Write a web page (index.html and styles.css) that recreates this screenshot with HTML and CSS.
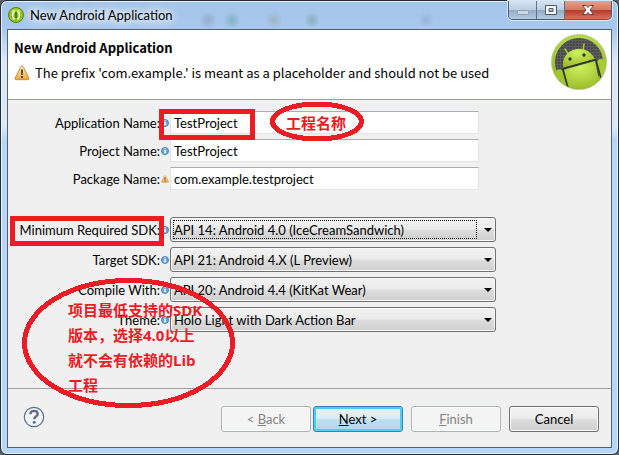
FILE: index.html
```html
<!DOCTYPE html>
<html lang="en">
<head>
<meta charset="utf-8">
<title>New Android Application</title>
<link rel="stylesheet" href="styles.css">
</head>
<body>
<svg class="defs" aria-hidden="true">
  <defs>
    <linearGradient id="amber" x1="0" y1="0" x2="0" y2="1"><stop offset="0" stop-color="#fff3c4"/><stop offset="1" stop-color="#eda63c"/></linearGradient>
    <linearGradient id="lime" x1="0" y1="0" x2="0" y2="1"><stop offset="0" stop-color="#b8db4a"/><stop offset="1" stop-color="#87a51d"/></linearGradient>
    <radialGradient id="robot" cx=".45" cy=".2" r=".9"><stop offset="0" stop-color="#cdf25c"/><stop offset="1" stop-color="#93b422"/></radialGradient>
    <pattern id="mesh" width="3" height="3" patternUnits="userSpaceOnUse"><path fill="#484848" d="M0 0h3v3H0z"/><path fill="#5c5c5c" d="M0 0h1v3H0zM0 0h3v1H0z"/></pattern>
    <clipPath id="disc"><circle cx="28" cy="28" r="27"/></clipPath>
    <symbol id="info" viewBox="0 0 8 8"><circle cx="4" cy="4" r="3.5" fill="#6ba5d0" stroke="#4787b5"/><path fill="#fff" d="M3.4 1.3h1.3v1H3.4zM3 3h1.7v2.5h.6v.8H2.9v-.8h.5V3.8H3z"/></symbol>
    <symbol id="warn" viewBox="0 0 16 16"><path d="M8 1.2Q9 1.2 9.5 2.3L14.8 13Q15.300 14.700 13.700 14.700H2.300Q.700 14.700 1.200 13L6.500 2.300Q7 1.200 8 1.200Z" fill="url(#amber)" stroke="#c78a3a"/><path d="M7 4.500h2L8.700 10H7.300zM7.100 11h1.800v1.900H7.100z" fill="#53391b"/></symbol>
  </defs>
</svg>
<div class="window">
  <header class="titlebar">
    <svg class="app-icon" viewBox="0 0 16 16"><circle cx="8" cy="8" r="7.500" fill="#8fc31d" stroke="#557d0d"/><ellipse cx="8" cy="4.500" rx="5" ry="3" fill="#a5d234"/><path d="M6.700 4Q4.800 4 5 6Q5.200 7.700 3.900 8Q5.200 8.300 5 10Q4.800 12 6.700 12M9.300 4Q11.200 4 11 6Q10.800 7.700 12.100 8Q10.800 8.300 11 10Q11.200 12 9.300 12" fill="none" stroke="#fff" stroke-width="1.300"/><path d="M7.200 5h1.600v6H7.200z" fill="#40650a"/></svg>
    <span class="caption">New Android Application</span>
    <div class="controls">
      <button class="ctl" aria-label="Minimize"><svg width="14" height="12" viewBox="0 0 14 12"><rect x="1.500" y="6.500" width="11" height="4" rx="1" fill="#ccd8e6" stroke="#8d9db2"/></svg></button>
      <button class="ctl" aria-label="Maximize"><svg width="14" height="12" viewBox="0 0 14 12"><path d="M1.500 1.500h11v9h-11zM5 4.500v3h4v-3z" fill="#fff" fill-rule="evenodd" stroke="#4d5768"/></svg></button>
      <button class="ctl close" aria-label="Close"><svg width="14" height="12" viewBox="0 0 14 12"><path d="M1.500 1.500h3.700L7 3.500l1.800-2h3.700L9 6l3.500 4.500H8.800L7 8.500l-1.800 2H1.500L5 6z" fill="#fff" stroke="#60444b"/></svg></button>
    </div>
  </header>
  <main class="dialog">
    <section class="banner">
      <div class="banner-text">
        <h1>New Android Application</h1>
        <p><svg class="warn" viewBox="0 0 16 16"><use href="#warn"/></svg>The prefix 'com.example.' is meant as a placeholder and should not be used</p>
      </div>
      <svg class="logo" viewBox="0 0 56 56">
        <circle cx="28" cy="28" r="27.500" fill="url(#lime)" stroke="#b9cb88"/>
        <circle cx="28" cy="28" r="24" fill="url(#mesh)"/>
        <g clip-path="url(#disc)">
          <path d="M14 15L18 21M33 10L32 17" stroke="#a9ca39" stroke-width="1.500" stroke-linecap="round"/>
          <path d="M12 34Q11 20 22 16Q36 11 44 25Z" fill="url(#robot)"/>
          <path d="M12 36L44 27L50 56H17Z" fill="url(#robot)"/>
          <path d="M46 29Q46 25 50 25Q54 25 56 32V50H51Z" fill="#a8cb36"/>
          <path d="M4 38Q7 34 11 36L16 54L4 47Z" fill="#a1c52f"/>
          <path d="M12 34.500L45 25.500M12 35L17 54M45 26L51 48" fill="none" stroke="#32381f" stroke-width="1.500"/>
          <circle cx="19" cy="25" r="1.700" fill="#34381e"/><circle cx="33" cy="21" r="1.700" fill="#34381e"/>
        </g>
      </svg>
    </section>
    <form class="form">
      <div class="row"><label for="app">Application Name:</label><svg class="mark" viewBox="0 0 8 8"><use href="#info"/></svg><input id="app" type="text" value="TestProject"></div>
      <div class="row"><label for="project">Project Name:</label><svg class="mark" viewBox="0 0 8 8"><use href="#info"/></svg><input id="project" type="text" value="TestProject"></div>
      <div class="row"><label for="package">Package Name:</label><svg class="mark" viewBox="0 0 16 16"><use href="#warn"/></svg><input id="package" type="text" value="com.example.testproject"></div>
      <div class="row pick first"><label for="min">Minimum Required SDK:</label><svg class="mark" viewBox="0 0 8 8"><use href="#info"/></svg><span class="combo focused"><select id="min"><option>API 14: Android 4.0 (IceCreamSandwich)</option></select></span></div>
      <div class="row pick"><label for="target">Target SDK:</label><svg class="mark" viewBox="0 0 8 8"><use href="#info"/></svg><span class="combo"><select id="target"><option>API 21: Android 4.X (L Preview)</option></select></span></div>
      <div class="row pick"><label for="compile">Compile With:</label><svg class="mark" viewBox="0 0 8 8"><use href="#info"/></svg><span class="combo"><select id="compile"><option>API 20: Android 4.4 (KitKat Wear)</option></select></span></div>
      <div class="row pick"><label for="theme">Theme:</label><svg class="mark" viewBox="0 0 8 8"><use href="#info"/></svg><span class="combo"><select id="theme"><option>Holo Light with Dark Action Bar</option></select></span></div>
    </form>
    <footer class="actions">
      <button class="help" aria-label="Help"><svg width="22" height="22" viewBox="0 0 22 22"><circle cx="11" cy="11" r="9.700" fill="#f3f5f8" stroke="#5c6e8d" stroke-width="1.200"/><path d="M7.300 8.300Q7.500 4.900 11 4.900Q14.700 4.900 14.700 8Q14.700 9.500 12.700 10.800Q11.300 11.700 11.300 13.300" fill="none" stroke="#5c6e8d" stroke-width="2.400"/><circle cx="11.200" cy="16.300" r="1.500" fill="#5c6e8d"/></svg></button>
      <div class="pair"><button class="btn" disabled>&lt; <u>B</u>ack</button><button class="btn default"><u>N</u>ext &gt;</button></div>
      <button class="btn" disabled><u>F</u>inish</button>
      <button class="btn">Cancel</button>
    </footer>
  </main>
  <svg class="ink" width="619" height="455" viewBox="0 0 619 455" shape-rendering="crispEdges" aria-hidden="true">
    <rect x="161.500" y="111.500" width="91" height="26"/>
    <rect x="12.500" y="218.500" width="149" height="25"/>
    <ellipse cx="317" cy="121.500" rx="44.500" ry="17.500"/>
    <ellipse cx="128.500" cy="343" rx="104" ry="62.500"/>
  </svg>
  <div class="note name-note">工程名称</div>
  <div class="note sdk-note">项目最低支持的SDK<br>版本，选择4.0以上<br>就不会有依赖的Lib<br>工程</div>
</div>
</body>
</html>
```

FILE: styles.css
```css
* { box-sizing: border-box; }

body {
  margin: 0;
  background: #59606b;
  color: #000;
  font: 13px/18px Lato, "Noto Sans CJK SC", sans-serif;
}

button, input, select { font: inherit; color: inherit; }

.defs { position: absolute; width: 0; height: 0; }

.window {
  position: relative;
  display: flex;
  flex-direction: column;
  min-height: 100vh;
  padding: 0 6px 6px;
  border: 1px solid #252c36;
  border-radius: 7px;
  background:
    radial-gradient(circle at 207px 19px, #7a86a066, transparent 9px),
    radial-gradient(circle at 231px 19px, #50a09a77, transparent 9px),
    radial-gradient(circle at 273px 19px, #8f9f8066, transparent 9px),
    radial-gradient(circle at 311px 19px, #5f908577, transparent 8px),
    radial-gradient(circle at 425px 19px, #7090b855, transparent 8px),
    linear-gradient(#a4c4ea, #a9c8ee 28px, #dce8f8 60px, #dce8f8 125px, #b5d6f8 140px);
  box-shadow: inset 0 0 0 1px #e5f3ff;
}

.titlebar {
  display: flex;
  align-items: flex-start;
  height: 28px;
}

.app-icon { width: 16px; height: 16px; margin: 6px 6px 0 1px; }

.caption {
  flex: 1;
  padding-top: 5px;
  text-shadow: 0 0 6px #fff, 0 0 10px #fff, 0 0 14px #fff;
}

.controls {
  display: flex;
  border: 1px solid #4b5c73;
  border-top: 0;
  border-radius: 0 0 5px 5px;
  box-shadow: 0 0 0 1px #d5e6f9;
  overflow: hidden;
}

.ctl {
  display: flex;
  justify-content: center;
  align-items: center;
  width: 28px;
  height: 18px;
  padding: 0;
  border: 0;
  border-right: 1px solid #60728c;
  background: linear-gradient(#d5e2f1, #bdcee3 48%, #94abc8 50%, #b4cae3);
}

.ctl.close {
  width: 46px;
  border: 0;
  background: linear-gradient(#e5a18f, #d37766 48%, #b63a26 50%, #d9705a);
}

.dialog {
  display: flex;
  flex: 1;
  flex-direction: column;
  border: 1px solid #51616d;
  background: #f0f0f0;
}

.banner {
  display: flex;
  justify-content: space-between;
  height: 70px;
  padding: 4px 4px 0 6px;
  border-bottom: 1px solid #98a098;
  background: #fff;
  font-family: "Noto Sans CJK SC", sans-serif;
}

.banner-text { padding-top: 5px; }

h1 { margin: 0; font-size: 13px; line-height: 18px; }

p { display: flex; align-items: center; margin: 7px 0 0; }

.warn { width: 16px; height: 16px; margin-right: 5px; }

.logo { width: 56px; height: 56px; }

.form {
  display: flex;
  flex: 1;
  flex-direction: column;
  gap: 5px;
  padding: 11px 115px 0 0;
}

.row {
  display: grid;
  grid-template-columns: 152px 8px 1fr;
  column-gap: 1px;
  align-items: center;
  padding-right: 17px;
}

.row label { text-align: right; white-space: nowrap; }

.mark { width: 8px; height: 8px; }

.row input {
  min-width: 0;
  height: 23px;
  padding: 0 3px;
  border: 1px solid #e2e3ea;
  border-top-color: #abadb3;
  background: #fff;
}

.row.pick { padding-right: 0; }
.row.first { margin-top: 22px; }

.combo { position: relative; display: flex; }

.combo::after {
  content: "";
  position: absolute;
  top: 11px;
  right: 4px;
  border: 4px solid transparent;
  border-top-color: #000;
  border-bottom: 0;
}

.focused::before {
  content: "";
  position: absolute;
  inset: 3px 19px 3px 3px;
  border: 1px dotted #000;
}

.combo select, .btn {
  height: 25px;
  border: 1px solid #707070;
  border-radius: 3px;
  background: linear-gradient(#f2f2f2, #ebebeb 49%, #dddddd 51%, #cfcfcf);
  box-shadow: inset 0 0 0 1px #fafafa;
}

.combo select { flex: 1; min-width: 0; padding: 0 3px; appearance: none; }

.actions {
  display: flex;
  gap: 8px;
  align-items: flex-start;
  height: 59px;
  padding: 17px 12px 0 15px;
  border-top: 1px solid #a0a0a0;
}

.help { display: flex; margin-right: auto; padding: 0; border: 0; background: none; }

.pair { display: flex; gap: 2px; }

.btn { width: 90px; height: 26px; padding: 0; }

.btn:disabled { border-color: #adb2b5; background: #f4f4f4; color: #838383; }

.btn.default {
  border-color: #3c7fb1;
  background: linear-gradient(#e9f5fb, #d7ebf5 49%, #bfe0ef 51%, #b1d6e8);
  box-shadow: inset 0 0 0 2px #48d0f7;
}

.ink {
  position: absolute;
  top: -1px;
  left: -1px;
  fill: none;
  stroke: #ed1c24;
  stroke-width: 5px;
  pointer-events: none;
}

.note {
  position: absolute;
  color: #ed1c24;
  font: bold 15px/25px "Open Sans", "Noto Sans CJK SC", sans-serif;
  white-space: nowrap;
}

.name-note { top: 110px; left: 285px; }
.sdk-note { top: 297px; left: 67px; }
```
